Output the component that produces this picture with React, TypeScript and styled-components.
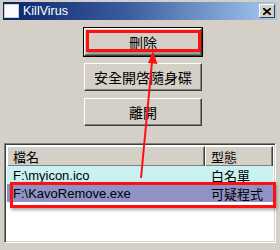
import React from "react";
import styled, { createGlobalStyle } from "styled-components";

const GlobalStyle = createGlobalStyle`
  html, body {
    margin: 0;
    padding: 0;
    background: #d4d0c8;
  }
  body {
    font-family: "Liberation Sans", "Noto Sans CJK TC", sans-serif;
  }
`;

const Window = styled.div`
  position: relative;
  width: 280px;
  height: 250px;
  box-sizing: border-box;
  padding: 2px 3px 0 3px;
  background: #d4d0c8;
  display: flex;
  flex-direction: column;
  overflow: hidden;
`;

const TitleBar = styled.div`
  height: 18px;
  display: flex;
  align-items: center;
  padding: 0 2px 0 1px;
  background: linear-gradient(to right, #0a246a 0%, #3a5c9e 45%, #a6caf0 100%);
`;

const TitleIcon = styled.div`
  width: 15px;
  height: 14px;
  background: #fcfcfc;
  border: 1px solid #c8d0e0;
  box-sizing: border-box;
`;

const TitleText = styled.span`
  flex: 1;
  margin-left: 4px;
  color: #fff;
  font-size: 12.5px;
  font-weight: normal;
`;

const CloseButton = styled.div`
  width: 16px;
  height: 14px;
  box-sizing: border-box;
  background: #d4d0c8;
  border: 1px solid;
  border-color: #fff #404040 #404040 #fff;
  display: flex;
  align-items: center;
  justify-content: center;
`;

const ButtonColumn = styled.div`
  margin: 7px 0 0 80px;
  width: 120px;
  display: flex;
  flex-direction: column;
  gap: 5px;
`;

const Button = styled.div<{ $default?: boolean; $marked?: boolean }>`
  position: relative;
  height: 30px;
  box-sizing: border-box;
  background: #d4d0c8;
  border: 1px solid ${(p) => (p.$default ? "#000" : "transparent")};
  display: flex;
  align-items: stretch;

  & > span {
    flex: 1;
    display: flex;
    align-items: center;
    justify-content: center;
    border: 1px solid;
    border-color: #fff #404040 #404040 #fff;
    box-shadow: inset -1px -1px 0 #808080;
    font-size: 14px;
    color: #000;
  }

  ${(p) =>
    p.$marked &&
    `
    &::after {
      content: "";
      position: absolute;
      left: 2px;
      top: 2px;
      right: 1px;
      bottom: 4px;
      border: 3px solid #ff1010;
      box-shadow: 1px 2px 3px rgba(0,0,0,0.35);
    }
  `}
`;

const ListView = styled.div`
  margin: 16px 1px 0 1px;
  height: 100px;
  box-sizing: border-box;
  background: #fff;
  border: 1px solid;
  border-color: #808080 #fff #fff #808080;
  box-shadow: inset 1px 1px 0 #404040, inset -1px -1px 0 #d4d0c8;
  padding: 2px;
`;

const Header = styled.div`
  display: grid;
  grid-template-columns: 198px 1fr;
  height: 20px;
`;

const HeaderCell = styled.div`
  box-sizing: border-box;
  background: #d4d0c8;
  border: 1px solid;
  border-color: #fff #404040 #404040 #fff;
  box-shadow: inset -1px -1px 0 #808080;
  padding-left: 5px;
  display: flex;
  align-items: center;
  font-size: 13px;
  color: #000;
`;

const Row = styled.div<{ $bg: string; $marked?: boolean }>`
  position: relative;
  display: grid;
  grid-template-columns: 198px 1fr;
  height: 18px;
  background: ${(p) => p.$bg};
  font-size: 13px;
  color: #000;

  & > span {
    display: flex;
    align-items: center;
    padding-left: 6px;
    white-space: nowrap;
  }

  ${(p) =>
    p.$marked &&
    `
    &::after {
      content: "";
      position: absolute;
      left: 3px;
      top: -2px;
      right: -3px;
      bottom: -6px;
      border: 3px solid #ff1010;
      box-shadow: 1px 2px 3px rgba(0,0,0,0.35);
    }
  `}
`;

const Arrow = styled.svg`
  position: absolute;
  left: 0;
  top: 0;
  pointer-events: none;
`;

export default function App() {
  return (
    <>
      <GlobalStyle />
      <Window>
        <TitleBar>
          <TitleIcon />
          <TitleText>KillVirus</TitleText>
          <CloseButton>
            <svg width="8" height="7" viewBox="0 0 8 7">
              <path d="M0 0 L8 7 M8 0 L0 7" stroke="#000" strokeWidth="1.8" />
            </svg>
          </CloseButton>
        </TitleBar>
        <ButtonColumn>
          <Button $default $marked>
            <span>刪除</span>
          </Button>
          <Button>
            <span>安全開啓隨身碟</span>
          </Button>
          <Button>
            <span>離開</span>
          </Button>
        </ButtonColumn>
        <ListView>
          <Header>
            <HeaderCell>檔名</HeaderCell>
            <HeaderCell>型態</HeaderCell>
          </Header>
          <Row $bg="#c9f1f1">
            <span>F:\myicon.ico</span>
            <span>白名單</span>
          </Row>
          <Row $bg="#8e92c6" $marked>
            <span>F:\KavoRemove.exe</span>
            <span>可疑程式</span>
          </Row>
        </ListView>
        <Arrow width="280" height="250" viewBox="0 0 280 250">
          <line x1="141" y1="178" x2="152" y2="62" stroke="#ff1010" strokeWidth="2" />
          <path d="M153 51 L157.5 64 L148 63 Z" fill="#ff1010" />
        </Arrow>
      </Window>
    </>
  );
}
